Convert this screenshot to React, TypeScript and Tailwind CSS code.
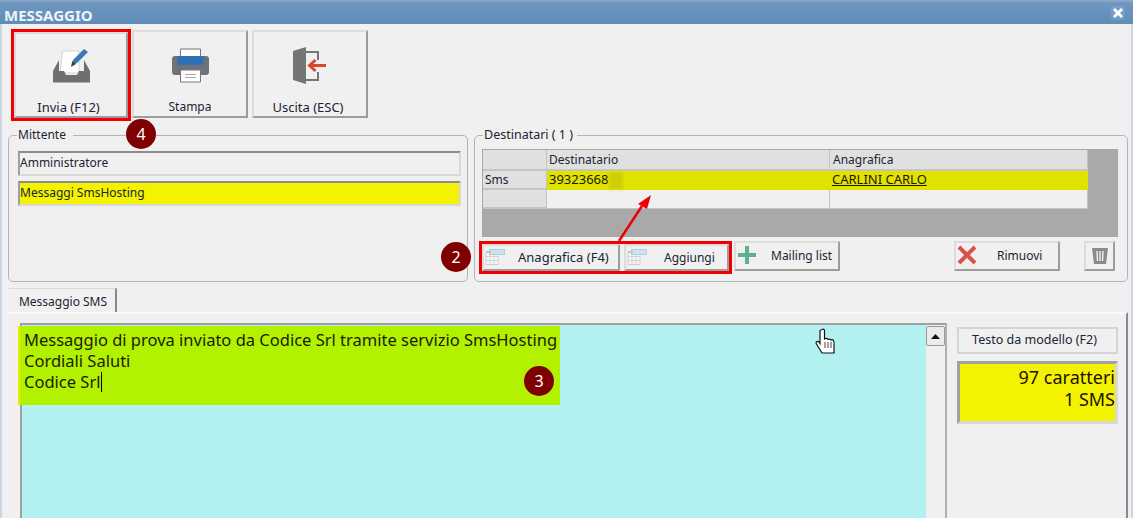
const font = { fontFamily: '"Noto Sans", "Open Sans", sans-serif' };

function Grid3({ className = "" }: { className?: string }) {
  return (
    <svg width="20" height="17" viewBox="0 0 20 17" className={className}>
      <rect x="1" y="4.500" width="12" height="12" fill="#f6f6f6" stroke="#cfcfcf" />
      <path d="M1 8.500h12M1 12.500h12M5 4.500v12M9 4.500v12" stroke="#d4d4d4" fill="none" />
      <rect x="4.500" y="1.500" width="15" height="5" fill="#cfe2ec" stroke="#b2cddb" />
      <path d="M1 4h5" stroke="#9dd0b4" strokeWidth="1.500" />
    </svg>
  );
}

function Bevel({ className = "", children }: { className?: string; children?: React.ReactNode }) {
  return (
    <div className={"flex items-center border-2 border-t-[#dcdcdc] border-l-[#dcdcdc] border-r-[#9c9c9c] border-b-[#9c9c9c] bg-[#f0f0f0] text-[#1c2433] " + className}>
      {children}
    </div>
  );
}

function ToolBtn({ icon, label, className = "", labelClass = "text-[13px]" }: { icon: React.ReactNode; label: string; className?: string; labelClass?: string }) {
  return (
    <Bevel className={"flex-col " + className}>
      <div className="flex h-[42px] items-center justify-center">{icon}</div>
      <div className={"mt-[12px] leading-[18px] " + labelClass}>{label}</div>
    </Bevel>
  );
}

function Badge({ n, className }: { n: string; className: string }) {
  return (
    <div className={"absolute flex h-[30px] w-[30px] items-center justify-center rounded-full bg-[#7f0000] text-[16px] text-white " + className}>
      {n}
    </div>
  );
}

function InboxIcon() {
  return (
    <svg width="37" height="35" viewBox="0 0 37 35">
      <path d="M9.500 3h16.500v22H7z" fill="#fff" stroke="#d4d4d4" />
      <path d="M6 12 0 23h6zM31 12l6 11h-6z" fill="#6f6f6f" />
      <path d="M0 23h11l2 4h11l2-4h11v11.500H0z" fill="#6f6f6f" />
      <path d="M19 17l1-5L31 1l4 3L24 15z" fill="#3d78b8" />
      <path d="M18 19l1.200-6 3.800 3z" fill="#444" />
    </svg>
  );
}

function PrinterIcon() {
  return (
    <svg width="37" height="35" viewBox="0 0 37 35">
      <path d="M8.500 1h20v8h-20z" fill="#fff" stroke="#777" />
      <rect x="0" y="8" width="37" height="19" rx="3" fill="#6e7378" />
      <path d="M5.500 8h26v7q0 2-2 2h-22q-2 0-2-2z" fill="#2f6fb5" />
      <path d="M8.500 22h20v12h-20z" fill="#fff" stroke="#777" />
      <path d="M13 26.500h11M13 29.500h11" stroke="#a8a8a8" />
    </svg>
  );
}

function ExitIcon() {
  return (
    <svg width="34" height="37" viewBox="0 0 34 37">
      <path d="M0 4 13 0v37L0 33z" fill="#757575" />
      <path d="M13 5h12v8M25 25v8H13" fill="none" stroke="#757575" strokeWidth="2" />
      <path d="M33 18.500H17M22.500 13l-6 5.500 6 5.500" fill="none" stroke="#d3492a" strokeWidth="3" />
    </svg>
  );
}

function HandCursor() {
  return (
    <svg width="22" height="28" viewBox="0 0 22 28">
      <path
        d="M7 1.500q2-1 2.500 1V11l1-.5q1.500-.5 2 .5l.5.500q1.500-1 2.500 0l.5 .5q1.500-.8 2.500 .5 1 1.500 .5 5L19 25H7L1.500 16q-1-2 .5-2.500 1.500-.5 3 2V3q0-1 2-1.500z"
        fill="#fff"
        stroke="#111"
        strokeWidth="1.200"
      />
      <path d="M10 14v6M13 14v6M16 14v6" stroke="#111" strokeWidth="0.800" />
    </svg>
  );
}

export default function App() {
  return (
    <div style={font} className="relative flex h-[518px] w-[1133px] flex-col overflow-hidden bg-[#f0f0f0] text-[12px] text-[#1c2433]">
      {/* Title bar */}
      <div className="flex h-[24px] shrink-0 items-center justify-between border-t-2 border-t-[#8aa6c6] bg-gradient-to-b from-[#6f97c0] to-[#5f8db8] pl-[4px] pr-[8px]">
        <span className="pt-[4px] text-[15px] font-bold leading-[18px] text-[#eef4fa]">MESSAGGIO</span>
        <div className="flex h-[14px] w-[14px] items-center justify-center rounded-[2px] bg-white/10">
          <svg width="10" height="10" viewBox="0 0 10 10">
            <path d="M1 1l8 8M9 1l-8 8" stroke="#fff" strokeWidth="2.800" />
          </svg>
        </div>
      </div>

      <div className="flex min-h-0 flex-1 flex-col border-x-2 border-x-[#c9d6e4]">
        {/* Toolbar */}
        <div className="ml-[9px] mt-[5px] flex h-[92px] shrink-0 items-start">
          <div className="h-[92px] w-[120px] border-[3px] border-[#f00000]">
            <ToolBtn icon={<InboxIcon />} label="Invia (F12)" labelClass="pr-[5px] text-[13px]" className="h-[86px] w-[114px] pt-[11px]" />
          </div>
          <ToolBtn icon={<PrinterIcon />} label="Stampa" labelClass="text-[12px]" className="ml-[1px] mt-[1px] h-[88px] w-[116px] pt-[13px]" />
          <ToolBtn icon={<ExitIcon />} label="Uscita (ESC)" labelClass="pr-[4px] text-[13px]" className="ml-[4px] mt-[1px] h-[88px] w-[116px] pt-[13px]" />
        </div>

        {/* Groups */}
        <div className="ml-[6px] mt-[6px] flex h-[155px] shrink-0 gap-[6px]">
          <fieldset className="h-[155px] w-[460px] rounded-[5px] border border-[#b4b4b4] pl-[9px] pr-[6px]">
            <legend className="-ml-[1px] px-[1px] text-[12px] leading-[16px]">Mittente&nbsp;&nbsp;</legend>
            <div className="mt-[8px] flex h-[25px] items-center border-2 border-[#d8d8d8] border-t-[#8c8c8c] border-l-[#a0a0a0] pb-[2px] text-[12px]">
              Amministratore
            </div>
            <div className="mt-[5px] flex h-[25px] items-center border-2 border-[#d8d8d8] border-t-[#8c8c8c] border-l-[#a0a0a0] bg-[#f3f300] pb-[2px] text-[12px]">
              Messaggi SmsHosting
            </div>
          </fieldset>

          <fieldset className="h-[155px] w-[654px] rounded-[5px] border border-[#b4b4b4] pl-[7px]">
            <legend className="ml-[1px] px-[1px] text-[12.500px] leading-[16px]">Destinatari ( 1 )&nbsp;</legend>
            <div className="mt-[6px] h-[88px] w-[636px] border border-[#a8a8a8] bg-[#a9a9a9]">
              <div className="grid w-[605px] grid-cols-[64px_283px_258px] grid-rows-[21px_19px_19px] bg-[#f0f0f0]">
                <div className="border-r border-b-2 border-[#c4c4c4] bg-[#e0e0e0]" />
                <div className="flex items-center border-r border-b-2 border-[#c4c4c4] bg-[#e0e0e0] pl-[2px] pt-[1px]">Destinatario</div>
                <div className="flex items-center border-r border-b-2 border-[#c4c4c4] bg-[#e0e0e0] pl-[3px] pt-[1px]">Anagrafica</div>

                <div className="flex items-center border-r border-b-2 border-[#c4c4c4] bg-[#e0e0e0] pl-[2px]">Sms</div>
                <div className="flex items-center bg-[#e2e200] pb-[1px] pl-[2px] text-[13px] text-[#1a1a00]">
                  39323668
                  <span className="ml-[0px] h-[17px] w-[14px] bg-[#cfcf08] blur-[1.500px]" />
                </div>
                <div className="flex items-center bg-[#e2e200] pb-[1px] pl-[2px] text-[13px] text-[#1a1a00] underline">CARLINI CARLO</div>

                <div className="border-r border-b-2 border-[#c4c4c4] bg-[#e0e0e0]" />
                <div className="border-r border-b border-[#c4c4c4]" />
                <div className="border-r border-b border-[#c4c4c4]" />
              </div>
            </div>

            <div className="mt-[4px] flex h-[33px] w-[634px] items-start">
              <div className="-ml-[3px] flex h-[33px] w-[253px] items-start border-[3px] border-[#f00000]">
                <Bevel className="h-[27px] w-[138px] pl-[1px]">
                  <Grid3 className="-mt-[3px]" />
                  <span className="ml-[13px] text-[13px]">Anagrafica (F4)</span>
                </Bevel>
                <Bevel className="ml-[4px] h-[27px] w-[105px] pl-[1px] text-[12px]">
                  <Grid3 className="-mt-[3px]" />
                  <span className="ml-[17px]">Aggiungi</span>
                </Bevel>
              </div>
              <Bevel className="ml-[2px] h-[30px] w-[106px] pl-[1px] text-[12px]">
                <svg width="20" height="20" viewBox="0 0 20 20" className="-mt-[3px]">
                  <path d="M10 1v18M1 10h18" stroke="#5fb08c" strokeWidth="4" />
                </svg>
                <span className="ml-[14px]">Mailing list</span>
              </Bevel>
              <Bevel className="ml-[114px] h-[30px] w-[106px] pl-[1px] text-[12px]">
                <svg width="20" height="20" viewBox="0 0 20 20" className="-mt-[3px]">
                  <path d="M2 2l16 16M18 2L2 18" stroke="#d9534a" strokeWidth="4" />
                </svg>
                <span className="ml-[20px]">Rimuovi</span>
              </Bevel>
              <Bevel className="ml-[24px] h-[30px] w-[31px] justify-center">
                <svg width="18" height="18" viewBox="0 0 18 18">
                  <path d="M1 1h16l-2 16H3z" fill="#8a8a8a" />
                  <path d="M6 4l.5 10M9 4v10M12 4l-.5 10" stroke="#f0f0f0" strokeWidth="1.400" />
                </svg>
              </Bevel>
            </div>
          </fieldset>
        </div>

        {/* Tabs */}
        <div className="ml-[7px] mt-[6px] flex h-[24px] w-[108px] shrink-0 items-center justify-center border-t border-r-2 border-t-[#d8d8d8] border-r-[#8a8a8a] bg-[#f0f0f0] pl-[2px] pt-[2px] text-[12px]">
          Messaggio SMS
        </div>

        {/* Panel */}
        <div className="ml-[6px] flex min-h-0 w-[1120px] flex-1 border-t-2 border-r-2 border-t-[#fafafa] border-r-[#8a8a8a] pl-[12px] pt-[9px]">
          <div className="flex h-[220px] w-[927px] shrink-0 border-t-2 border-l-2 border-r-2 border-t-[#a0a0a0] border-l-[#a0a0a0] border-r-[#b0b0b0]">
            <div className="w-[904px] bg-[#b2f1ef]" />
            <div className="flex w-[19px] flex-col pt-[1px]">
              <div className="flex h-[20px] w-[19px] items-center justify-center rounded-[2px] border border-[#9a9a9a] bg-[#ececec]">
                <svg width="9" height="5" viewBox="0 0 9 5">
                  <path d="M4.500 0 9 5H0z" fill="#111" />
                </svg>
              </div>
            </div>
          </div>
          <div className="ml-[10px] w-[161px] shrink-0 pt-[4px]">
            <div className="flex h-[27px] items-center justify-center border-2 border-[#d4d4d4] pr-[6px] text-[12.500px]">
              Testo da modello (F2)
            </div>
            <div className="mt-[7px] h-[63px] border-[3px] border-[#d8d8d8] border-t-[#a0a0a0] border-l-[#a0a0a0] bg-[#f3f300] pt-[2px] text-right text-[18px] leading-[22px] text-[#221100]">
              97 caratteri
              <br />
              1 SMS
            </div>
          </div>
        </div>
      </div>

      {/* Overlays */}
      <div className="absolute left-[18px] top-[326px] h-[79px] w-[542px] border-l-2 border-l-[#e8e800] bg-[#b2f200] pl-[4px] pt-[3px] text-[16.500px] leading-[21px] text-[#1c1c00]">
        <div className="whitespace-nowrap">Messaggio di prova inviato da Codice Srl tramite servizio SmsHosting</div>
        <div>Cordiali Saluti</div>
        <div className="flex items-center">
          Codice Srl<span className="ml-[1px] h-[20px] w-[1px] bg-black" />
        </div>
      </div>
      <Badge n="4" className="left-[126px] top-[119px]" />
      <Badge n="2" className="left-[441px] top-[242px]" />
      <Badge n="3" className="left-[524px] top-[366px]" />
      <svg className="absolute left-[610px] top-[190px]" width="50" height="56" viewBox="0 0 50 56">
        <path d="M9 51 32 16" stroke="#f00000" strokeWidth="2.500" />
        <path d="M41 5 37 19 28 14z" fill="#f00000" />
      </svg>
      <div className="absolute left-[815px] top-[328px]">
        <HandCursor />
      </div>
    </div>
  );
}
